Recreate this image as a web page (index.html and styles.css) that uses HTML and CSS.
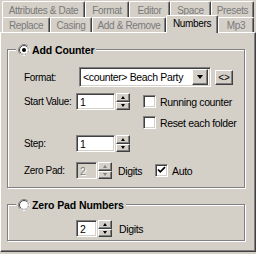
FILE: index.html
```html
<!DOCTYPE html>
<html>
<head>
<meta charset="utf-8">
<link rel="stylesheet" href="styles.css">
</head>
<body>
<div class="tabrow r1">
  <div class="tab t-attr">Attributes &amp; Date</div>
  <div class="tab t-format">Format</div>
  <div class="tab t-editor">Editor</div>
  <div class="tab t-space">Space</div>
  <div class="tab t-presets">Presets</div>
</div>
<div class="tabrow r2">
  <div class="tab t-replace">Replace</div>
  <div class="tab t-casing">Casing</div>
  <div class="tab t-addrem">Add &amp; Remove</div>
  <div class="tab t-numbers active">Numbers</div>
  <div class="tab t-mp3">Mp3</div>
</div>
<div class="panel">
  <div class="group g1">
    <div class="legend">
      <svg class="radio" width="12" height="12" viewBox="0 0 12 12">
        <circle cx="6" cy="6" r="5.5" fill="#fff" stroke="#808080"/>
        <path d="M9.89 2.11 A5.5 5.5 0 0 1 2.11 9.89" fill="none" stroke="#fff"/>
        <circle cx="6" cy="6" r="4.5" fill="#fff" stroke="#404040"/>
        <path d="M9.18 2.82 A4.5 4.5 0 0 1 2.82 9.18" fill="none" stroke="#d4d0c8"/>
        <circle cx="6" cy="6" r="2" fill="#000"/>
      </svg>
      <span class="legend-text">Add Counter</span>
    </div>
    <div class="row row-format">
      <span class="label lbl-format">Format:</span>
      <div class="combo">
        <span class="combo-text">&lt;counter&gt; Beach Party</span>
        <div class="combo-btn"><span class="tri-down"></span></div>
      </div>
      <div class="btn btn-tag">&lt;&gt;</div>
    </div>
    <div class="row row-start">
      <span class="label">Start Value:</span>
      <div class="field f-wide">1</div>
      <div class="spin"><div class="sb"><span class="au"></span></div><div class="sb"><span class="ad"></span></div></div>
      <div class="check cb-running"></div>
      <span class="ctext">Running counter</span>
    </div>
    <div class="row row-reset">
      <div class="check"></div>
      <span class="ctext">Reset each folder</span>
    </div>
    <div class="row row-step">
      <span class="label">Step:</span>
      <div class="field f-wide">1</div>
      <div class="spin"><div class="sb"><span class="au"></span></div><div class="sb"><span class="ad"></span></div></div>
    </div>
    <div class="row row-zero">
      <span class="label">Zero Pad:</span>
      <div class="field f-narrow disabled">2</div>
      <div class="spin dis"><div class="sb"><span class="au"></span></div><div class="sb"><span class="ad"></span></div></div>
      <span class="digits">Digits</span>
      <div class="check">
        <svg width="9" height="9" viewBox="0 0 9 9"><path d="M1 3.5 L3.3 5.8 L8 1.2" fill="none" stroke="#000" stroke-width="1.7"/></svg>
      </div>
      <span class="ctext">Auto</span>
    </div>
  </div>
  <div class="group g2">
    <div class="legend">
      <svg class="radio" width="12" height="12" viewBox="0 0 12 12">
        <circle cx="6" cy="6" r="5.5" fill="#fff" stroke="#808080"/>
        <path d="M9.89 2.11 A5.5 5.5 0 0 1 2.11 9.89" fill="none" stroke="#fff"/>
        <circle cx="6" cy="6" r="4.5" fill="#fff" stroke="#404040"/>
        <path d="M9.18 2.82 A4.5 4.5 0 0 1 2.82 9.18" fill="none" stroke="#d4d0c8"/>
      </svg>
      <span class="legend-text">Zero Pad Numbers</span>
    </div>
    <div class="row row-pad">
      <div class="field f-narrow">2</div>
      <div class="spin"><div class="sb"><span class="au"></span></div><div class="sb"><span class="ad"></span></div></div>
      <span class="digits">Digits</span>
    </div>
  </div>
</div>
</body>
</html>
```

FILE: styles.css
```css
* { box-sizing: border-box; }
html, body { margin: 0; padding: 0; }
body {
  width: 256px;
  height: 254px;
  overflow: hidden;
  background: #d4d0c8;
  font-family: "Liberation Sans", Arial, sans-serif;
  font-size: 10px;
  letter-spacing: -0.35px;
  color: #000;
}

.tabrow { display: flex; padding-left: 2px; }
.r1 { margin-top: 1px; height: 16px; }
.r2 { height: 15px; }

.tab {
  height: 100%;
  border-top: 1px solid #fff;
  border-left: 1px solid #fff;
  border-right: 1px solid #404040;
  box-shadow: inset -1px 0 #808080;
  border-radius: 2px 2px 0 0;
  color: #7a7a7a;
  display: flex;
  align-items: center;
  justify-content: center;
  white-space: nowrap;
}
.r1 .tab { padding-top: 1px; }
.t-attr { width: 83px; }
.t-format { width: 44px; }
.t-editor { width: 41px; }
.t-space { width: 41px; }
.t-presets { width: 43px; }
.t-replace { width: 48px; }
.t-casing { width: 42px; }
.t-addrem { width: 74px; }
.t-numbers { width: 52px; }
.t-mp3 { width: 36px; }

.tab.active {
  position: relative;
  z-index: 1;
  height: 18px;
  margin-top: -2px;
  background: #d4d0c8;
  color: #000;
  padding-bottom: 2px;
}

.panel {
  height: 220px;
  border: 1px solid;
  border-color: #fff #404040 #404040 #fff;
  box-shadow: inset -1px -1px #808080;
  padding: 16px 0 0 6px;
}

.group {
  width: 238px;
  border: 1px solid #808080;
  box-shadow: inset 1px 1px #fff, 1px 1px #fff;
}
.g1 { height: 139px; }
.g2 { height: 37px; margin-top: 16px; }

.legend {
  display: inline-flex;
  align-items: center;
  height: 13px;
  margin-top: -7px;
  margin-left: 8px;
  padding: 0 2px;
  background: #d4d0c8;
  vertical-align: top;
}
.legend-text {
  font-weight: bold;
  font-size: 10.5px;
  letter-spacing: -0.1px;
  margin-left: 2px;
}
.radio { display: block; }

.row { display: flex; align-items: center; }
.label { width: 52px; }
.lbl-format { width: 55px; }

.row-format { height: 20px; margin-top: 6px; padding-left: 16px; }
.row-start { height: 17px; margin-top: 6px; padding-left: 16px; }
.row-reset { height: 13px; margin-top: 6px; padding-left: 135px; }
.row-step { height: 17px; margin-top: 6px; padding-left: 16px; }
.row-zero { height: 17px; margin-top: 10px; padding-left: 16px; }
.row-pad { height: 17px; margin-top: 4px; padding-left: 68px; }

.combo {
  width: 132px;
  height: 20px;
  display: flex;
  align-items: center;
  background: #fff;
  border: 1px solid;
  border-color: #808080 #fff #fff #808080;
  box-shadow: inset 1px 1px #404040, inset -1px -1px #d4d0c8;
  padding: 2px 2px 2px 3px;
}
.combo-text { flex: 1; white-space: nowrap; font-size: 10.5px; }
.combo-btn {
  width: 16px;
  height: 16px;
  background: #d4d0c8;
  border: 1px solid;
  border-color: #fff #404040 #404040 #fff;
  box-shadow: inset -1px -1px #808080;
  display: flex;
  align-items: center;
  justify-content: center;
}
.tri-down {
  width: 0; height: 0;
  border-left: 3.5px solid transparent;
  border-right: 3.5px solid transparent;
  border-top: 4px solid #000;
}

.btn {
  background: #d4d0c8;
  border: 1px solid;
  border-color: #fff #404040 #404040 #fff;
  box-shadow: inset -1px -1px #808080;
  display: flex;
  align-items: center;
  justify-content: center;
}
.btn-tag { width: 18px; height: 15px; margin-left: 4px; letter-spacing: 0; }

.field {
  height: 17px;
  background: #fff;
  border: 1px solid;
  border-color: #808080 #fff #fff #808080;
  box-shadow: inset 1px 1px #404040, inset -1px -1px #d4d0c8;
  padding-left: 3px;
  display: flex;
  align-items: center;
  font-size: 10.5px;
}
.f-wide { width: 39px; }
.f-narrow { width: 21px; }
.field.disabled { background: #d4d0c8; color: #808080; text-shadow: 1px 1px #fff; }

.spin {
  width: 14px;
  height: 17px;
  margin-left: 1px;
  display: flex;
  flex-direction: column;
}
.sb {
  flex: 1;
  background: #d4d0c8;
  border: 1px solid;
  border-color: #fff #404040 #404040 #fff;
  box-shadow: inset -1px -1px #808080;
  display: flex;
  align-items: center;
  justify-content: center;
}
.au, .ad { width: 0; height: 0; border-left: 2.5px solid transparent; border-right: 2.5px solid transparent; }
.au { border-bottom: 3px solid #000; }
.ad { border-top: 3px solid #000; }
.spin.dis .au { border-bottom-color: #808080; }
.spin.dis .ad { border-top-color: #808080; }

.check {
  width: 13px;
  height: 13px;
  background: #fff;
  border: 1px solid;
  border-color: #808080 #fff #fff #808080;
  box-shadow: inset 1px 1px #404040, inset -1px -1px #d4d0c8;
  display: flex;
  align-items: center;
  justify-content: center;
  flex: none;
}
.cb-running { margin-left: 13px; }
.ctext { margin-left: 4px; white-space: nowrap; font-size: 10.5px; }
.digits { margin-left: 6px; width: 37px; font-size: 10.5px; }
.row-pad .digits { margin-left: 7px; }
```
